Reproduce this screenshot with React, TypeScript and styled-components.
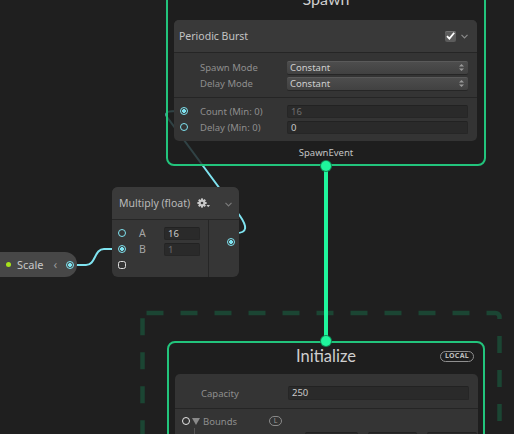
import React from 'react';
import styled, { createGlobalStyle } from 'styled-components';

const GlobalStyle = createGlobalStyle`
  html, body {
    margin: 0;
    padding: 0;
    background: #1f1f1f;
  }
  body {
    font-family: "Noto Sans", "Open Sans", sans-serif;
  }
`;

const CYAN = '#7fe3f0';
const GREEN = '#22c47c';
const FLOW = '#1ff59c';

const Canvas = styled.div`
  position: relative;
  width: 514px;
  height: 434px;
  overflow: hidden;
  background: #1f1f1f;
`;

const Layer = styled.svg`
  position: absolute;
  left: 0;
  top: 0;
  width: 514px;
  height: 434px;
  pointer-events: none;
`;

// contexts
const Context = styled.div<{ $left: number; $top: number; $width: number }>`
  position: absolute;
  left: ${p => p.$left}px;
  top: ${p => p.$top}px;
  width: ${p => p.$width}px;
  box-sizing: border-box;
  border: 2px solid ${GREEN};
  border-radius: 8px;
  background: rgba(31, 31, 31, 0.82);
`;

const ContextTitle = styled.div<{ $height: number; $line: number; $size: number }>`
  height: ${p => p.$height}px;
  display: grid;
  grid-template-columns: 1fr auto 1fr;
  align-items: start;
  line-height: ${p => p.$line}px;
  font-family: Lato, "Noto Sans", sans-serif;
  font-size: ${p => p.$size}px;
  color: #cfcfcf;
  text-align: center;
`;

const Badge = styled.span`
  justify-self: end;
  margin: 8px 9px 0 0;
  height: 11px;
  padding: 0 4px;
  border: 1.5px solid #8f8f8f;
  border-radius: 6px;
  box-sizing: border-box;
  font-family: "Noto Sans", sans-serif;
  font-size: 7px;
  font-weight: 700;
  letter-spacing: 0.3px;
  line-height: 8px;
  color: #bdbdbd;
`;

const Footer = styled.div`
  height: 23px;
  display: flex;
  align-items: center;
  justify-content: center;
  font-size: 9.5px;
  color: #c4c4c4;
`;

const FlowPort = styled.span<{ $side: 'top' | 'bottom' }>`
  position: absolute;
  left: 50%;
  ${p => (p.$side === 'top' ? 'top: -7px;' : 'bottom: -7px;')}
  width: 10px;
  height: 10px;
  margin-left: -5px;
  border-radius: 50%;
  background: ${FLOW};
  box-shadow: 0 0 0 1px #0e8a55;
`;

// blocks
const Block = styled.div<{ $margin: string }>`
  margin: ${p => p.$margin};
  border-radius: 5px;
  background: #343434;
  overflow: hidden;
`;

const BlockHeader = styled.div`
  height: 32px;
  display: flex;
  align-items: center;
  padding: 0 9px 0 5px;
  background: #393939;
  border-bottom: 1px solid #252525;
  font-size: 10.5px;
  color: #c3c3c3;
  gap: 5px;
`;

const HeaderTitle = styled.span`
  flex: 1;
`;

const Section = styled.div<{ $pad: string; $line?: boolean }>`
  padding: ${p => p.$pad};
  border-bottom: ${p => (p.$line ? '1px solid #252525' : 'none')};
`;

const Row = styled.div<{ $h?: number }>`
  height: ${p => p.$h ?? 16}px;
  display: grid;
  grid-template-columns: 26px 87px 1fr;
  align-items: center;
  padding-right: 9px;
`;

const PortCell = styled.span`
  display: flex;
  align-items: center;
  padding-left: 6px;
`;

const Label = styled.span`
  font-size: 9.5px;
  color: #8e8e8e;
  white-space: nowrap;
`;

const Field = styled.div<{ $dim?: boolean; $h?: number }>`
  height: ${p => p.$h ?? 13}px;
  box-sizing: border-box;
  background: #2a2a2a;
  border: 1px solid #262626;
  border-top-color: #222;
  border-radius: 2px;
  padding-left: 3px;
  font-size: 9.5px;
  line-height: 11px;
  color: ${p => (p.$dim ? '#6e6e6e' : '#c9c9c9')};
`;

const Dropdown = styled.div`
  height: 13px;
  box-sizing: border-box;
  display: flex;
  align-items: center;
  justify-content: space-between;
  padding: 0 4px 0 3px;
  border-radius: 2px;
  background: linear-gradient(#4d4d4d, #414141);
  border-top: 1px solid #5a5a5a;
  box-shadow: 0 1px 0 #262626;
  font-size: 9.5px;
  color: #cfcfcf;
`;

const Port = styled.span<{ $variant: 'ring' | 'linked' | 'box'; $color?: string }>`
  display: inline-block;
  width: 8px;
  height: 8px;
  box-sizing: border-box;
  border: 1.5px solid ${p => p.$color ?? CYAN};
  border-radius: ${p => (p.$variant === 'box' ? '2.5px' : '50%')};
  background: ${p =>
    p.$variant === 'linked' ? `radial-gradient(circle, ${CYAN} 0 1.6px, transparent 2.2px)` : 'transparent'};
`;

const CheckBox = styled.span`
  width: 11px;
  height: 11px;
  border-radius: 2px;
  background: #5c5c5c;
  box-shadow: inset 0 1px 0 #707070;
  display: flex;
  align-items: center;
  justify-content: center;
`;

// operator node
const Node = styled.div`
  position: absolute;
  left: 112px;
  top: 187px;
  width: 127px;
  height: 90px;
  border-radius: 6px;
  background: #363636;
  overflow: hidden;
  display: flex;
  flex-direction: column;
`;

const NodeHeader = styled.div`
  height: 32px;
  flex: none;
  display: flex;
  align-items: center;
  padding: 0 7px;
  gap: 7px;
  background: #3a3a3a;
  border-bottom: 1px solid #262626;
  font-size: 10.5px;
  color: #b9b9b9;
`;

const NodeBody = styled.div`
  flex: 1;
  display: grid;
  grid-template-columns: 97px 1fr;
`;

const Inputs = styled.div`
  padding-top: 5px;
  border-right: 1px solid #262626;
`;

const Outputs = styled.div`
  padding: 9px 0 0 18px;
`;

const NodeRow = styled.div`
  height: 16px;
  display: grid;
  grid-template-columns: 21px 25px 36px;
  align-items: center;
  padding-left: 6px;
`;

const NodeLabel = styled.span`
  font-size: 10.5px;
  color: #a6a6a6;
`;

// parameter pill
const Param = styled.div`
  position: absolute;
  left: -12px;
  top: 252px;
  width: 89px;
  height: 25px;
  border-radius: 12px;
  background: #474747;
  display: flex;
  align-items: center;
  padding-left: 18px;
  box-sizing: border-box;
  font-size: 11px;
  color: #c8c8c8;
`;

const Dot = styled.span`
  width: 5px;
  height: 5px;
  border-radius: 50%;
  background: #a6e21b;
  margin-right: 6px;
`;

const ParamArrow = styled.span`
  margin: 0 9px 0 10px;
  color: #9a9a9a;
  font-size: 12px;
`;

const BoundsRow = styled.div`
  height: 14px;
  display: flex;
  align-items: center;
  padding-left: 7px;
  gap: 2px;
`;

const Tri = styled.span`
  width: 0;
  height: 0;
  border-left: 4px solid transparent;
  border-right: 4px solid transparent;
  border-top: 7px solid #8a8a8a;
  margin-right: 1px;
`;

const LocalMark = styled.span`
  margin-left: 30px;
  width: 13px;
  height: 10px;
  box-sizing: border-box;
  border: 1px solid #8a8a8a;
  border-radius: 6px;
  font-size: 7px;
  line-height: 8px;
  text-align: center;
  color: #9a9a9a;
`;

const VectorRow = styled.div`
  height: 14px;
  display: grid;
  grid-template-columns: 120px 53px 49px 50px;
  column-gap: 10px;
  align-items: end;
`;

const Stem = styled.span`
  position: relative;
  align-self: stretch;
  margin-left: 19px;
  border-left: 1px solid #555;
  &::before {
    content: '';
    position: absolute;
    left: -10px;
    bottom: 0;
    width: 2px;
    height: 3px;
    background: #d8d26a;
  }
`;

const Chevron = ({ color = '#8a8a8a' }: { color?: string }) => (
  <svg width="7" height="5" viewBox="0 0 7 5">
    <polyline points="0.5,0.8 3.5,3.8 6.5,0.8" fill="none" stroke={color} strokeWidth="1.2" />
  </svg>
);

const UpDown = () => (
  <svg width="5" height="7" viewBox="0 0 5 7">
    <polygon points="2.5,0 5,2.6 0,2.6" fill="#9a9a9a" />
    <polygon points="2.5,7 5,4.4 0,4.4" fill="#9a9a9a" />
  </svg>
);

const Gear = () => (
  <svg width="13" height="10" viewBox="0 0 13 10">
    <g transform="translate(5 5)" fill="#c9c9c9">
      {[0, 45, 90, 135].map(a => (
        <rect key={a} x="-1" y="-4.6" width="2" height="9.2" transform={`rotate(${a})`} />
      ))}
      <circle r="3.4" />
      <circle r="1.3" fill="#3a3a3a" />
    </g>
    <polygon points="9.5,7 13,7 11.25,9.2" fill="#c9c9c9" />
  </svg>
);

const App: React.FC = () => {
  return (
    <Canvas>
      <GlobalStyle />

      {/* edges, under the nodes */}
      <Layer>
        <rect
          x="142.5"
          y="313"
          width="357"
          height="220"
          rx="4"
          fill="none"
          stroke="#1b4533"
          strokeWidth="4.5"
          strokeDasharray="17 17"
        />
        <path
          d="M 184 111 C 172 111, 164 110, 167 117 L 240 216 C 247 226, 248 233, 236 233"
          fill="none"
          stroke={CYAN}
          strokeWidth="2"
        />
        <path d="M 72 265 L 86 265 C 96 265, 94 249, 104 249 L 118 249" fill="none" stroke={CYAN} strokeWidth="2" />
        <line x1="326" y1="166" x2="326" y2="341" stroke={FLOW} strokeWidth="4" />
      </Layer>

      <Context $left={166} $top={-24} $width={320}>
        <ContextTitle $height={42} $line={42} $size={16}>
          <span />
          <span>Spawn</span>
          <span />
        </ContextTitle>
        <Block $margin="0 7px 0 6px">
          <BlockHeader>
            <HeaderTitle>Periodic Burst</HeaderTitle>
            <CheckBox>
              <svg width="9" height="8" viewBox="0 0 9 8">
                <polyline points="1,4.2 3.4,6.6 8.2,0.8" fill="none" stroke="#fff" strokeWidth="1.8" />
              </svg>
            </CheckBox>
            <Chevron />
          </BlockHeader>
          <Section $pad="6px 0" $line>
            <Row>
              <span />
              <Label>Spawn Mode</Label>
              <Dropdown>
                Constant <UpDown />
              </Dropdown>
            </Row>
            <Row>
              <span />
              <Label>Delay Mode</Label>
              <Dropdown>
                Constant <UpDown />
              </Dropdown>
            </Row>
          </Section>
          <Section $pad="5px 0 6px">
            <Row>
              <PortCell>
                <Port $variant="linked" />
              </PortCell>
              <Label>Count (Min: 0)</Label>
              <Field $dim>16</Field>
            </Row>
            <Row>
              <PortCell>
                <Port $variant="ring" />
              </PortCell>
              <Label>Delay (Min: 0)</Label>
              <Field>0</Field>
            </Row>
          </Section>
        </Block>
        <Footer>SpawnEvent</Footer>
        <FlowPort $side="bottom" />
      </Context>

      <Context $left={167} $top={341} $width={318}>
        <FlowPort $side="top" />
        <ContextTitle $height={31} $line={27} $size={16.5}>
          <span />
          <span>Initialize</span>
          <Badge>LOCAL</Badge>
        </ContextTitle>
        <Block $margin="0 5px 0 6px">
          <Section $pad="12px 0 8px" $line>
            <Row $h={14}>
              <span />
              <Label>Capacity</Label>
              <Field $h={14}>250</Field>
            </Row>
          </Section>
          <Section $pad="5px 0 0">
            <BoundsRow>
              <Port $variant="ring" $color="#e6e6e6" />
              <Tri />
              <Label>Bounds</Label>
              <LocalMark>L</LocalMark>
            </BoundsRow>
            <VectorRow>
              <Stem />
              <Field $h={10} />
              <Field $h={10} />
              <Field $h={10} />
            </VectorRow>
          </Section>
        </Block>
      </Context>

      <Node>
        <NodeHeader>
          <span>Multiply (float)</span>
          <Gear />
          <span style={{ marginLeft: 'auto' }}>
            <Chevron color="#7a7a7a" />
          </span>
        </NodeHeader>
        <NodeBody>
          <Inputs>
            <NodeRow>
              <Port $variant="ring" />
              <NodeLabel>A</NodeLabel>
              <Field>16</Field>
            </NodeRow>
            <NodeRow>
              <Port $variant="linked" />
              <NodeLabel>B</NodeLabel>
              <Field $dim>1</Field>
            </NodeRow>
            <NodeRow>
              <Port $variant="box" $color="#dcdcdc" />
            </NodeRow>
          </Inputs>
          <Outputs>
            <Port $variant="linked" />
          </Outputs>
        </NodeBody>
      </Node>

      <Param>
        <Dot />
        <span>Scale</span>
        <ParamArrow>&lsaquo;</ParamArrow>
        <Port $variant="linked" />
      </Param>
    </Canvas>
  );
};

export default App;
